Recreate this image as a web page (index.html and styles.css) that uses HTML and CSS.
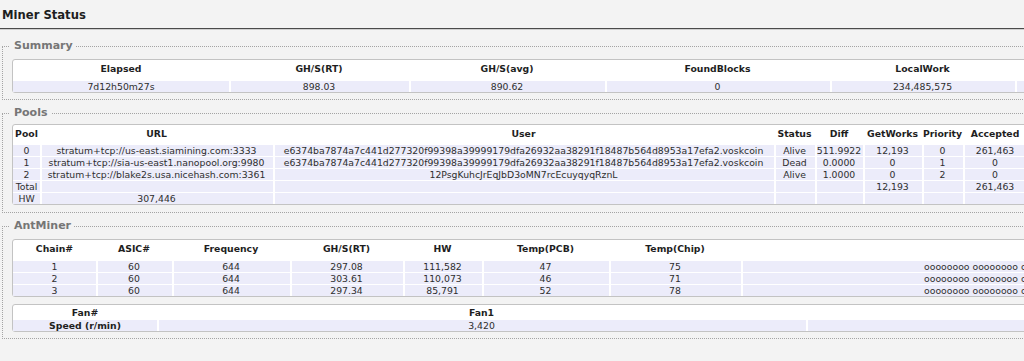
FILE: index.html
```html
<!DOCTYPE html>
<html lang="en">
<head>
<meta charset="utf-8">
<title>Miner Status</title>
<link rel="stylesheet" href="styles.css">
</head>
<body>
<h2 class="title">Miner Status</h2>

<fieldset class="panel panel-first">
  <legend class="panel-legend">Summary</legend>
  <table class="grid grid-summary">
    <colgroup>
      <col class="w216"><col class="w180"><col class="w196"><col class="w225"><col class="w185"><col class="w180">
    </colgroup>
    <thead>
      <tr><th>Elapsed</th><th>GH/S(RT)</th><th>GH/S(avg)</th><th>FoundBlocks</th><th>LocalWork</th><th></th></tr>
    </thead>
    <tbody>
      <tr><td>7d12h50m27s</td><td>898.03</td><td>890.62</td><td>0</td><td>234,485,575</td><td></td></tr>
    </tbody>
  </table>
</fieldset>

<fieldset class="panel panel-pools">
  <legend class="panel-legend">Pools</legend>
  <table class="grid grid-pools">
    <colgroup>
      <col class="w27"><col class="w233"><col class="w501"><col class="w41"><col class="w48"><col class="w59"><col class="w41"><col class="w64"><col class="w120">
    </colgroup>
    <thead>
      <tr><th>Pool</th><th>URL</th><th>User</th><th>Status</th><th>Diff</th><th>GetWorks</th><th>Priority</th><th>Accepted</th><th></th></tr>
    </thead>
    <tbody>
      <tr><td>0</td><td>stratum+tcp://us-east.siamining.com:3333</td><td>e6374ba7874a7c441d277320f99398a39999179dfa26932aa38291f18487b564d8953a17efa2.voskcoin</td><td>Alive</td><td>511.9922</td><td>12,193</td><td>0</td><td>261,463</td><td></td></tr>
      <tr><td>1</td><td>stratum+tcp://sia-us-east1.nanopool.org:9980</td><td>e6374ba7874a7c441d277320f99398a39999179dfa26932aa38291f18487b564d8953a17efa2.voskcoin</td><td>Dead</td><td>0.0000</td><td>0</td><td>1</td><td>0</td><td></td></tr>
      <tr><td>2</td><td>stratum+tcp://blake2s.usa.nicehash.com:3361</td><td>12PsgKuhcJrEqJbD3oMN7rcEcuyqyqRznL</td><td>Alive</td><td>1.0000</td><td>0</td><td>2</td><td>0</td><td></td></tr>
      <tr><td>Total</td><td></td><td></td><td></td><td></td><td>12,193</td><td></td><td>261,463</td><td></td></tr>
      <tr><td>HW</td><td>307,446</td><td></td><td></td><td></td><td></td><td></td><td></td><td></td></tr>
    </tbody>
  </table>
</fieldset>

<fieldset class="panel">
  <legend class="panel-legend">AntMiner</legend>
  <table class="grid grid-chains">
    <colgroup>
      <col class="w83"><col class="w76"><col class="w118"><col class="w113"><col class="w79"><col class="w127"><col class="w132"><col class="w728">
    </colgroup>
    <thead>
      <tr><th>Chain#</th><th>ASIC#</th><th>Frequency</th><th>GH/S(RT)</th><th>HW</th><th>Temp(PCB)</th><th>Temp(Chip)</th><th></th></tr>
    </thead>
    <tbody>
      <tr><td>1</td><td>60</td><td>644</td><td>297.08</td><td>111,582</td><td>47</td><td>75</td><td>oooooooo oooooooo oooooooo oooooooo oooooooo oooooooo oooooooo oooo</td></tr>
      <tr><td>2</td><td>60</td><td>644</td><td>303.61</td><td>110,073</td><td>46</td><td>71</td><td>oooooooo oooooooo oooooooo oooooooo oooooooo oooooooo oooooooo oooo</td></tr>
      <tr><td>3</td><td>60</td><td>644</td><td>297.34</td><td>85,791</td><td>52</td><td>78</td><td>oooooooo oooooooo oooooooo oooooooo oooooooo oooooooo oooooooo oooo</td></tr>
    </tbody>
  </table>

  <table class="grid grid-fans">
    <colgroup>
      <col class="w144"><col class="w649"><col class="w600">
    </colgroup>
    <thead>
      <tr><th>Fan#</th><th>Fan1</th><th></th></tr>
    </thead>
    <tbody>
      <tr><th class="row-head">Speed (r/min)</th><td>3,420</td><td></td></tr>
    </tbody>
  </table>
</fieldset>
</body>
</html>
```

FILE: styles.css
```css
html {
  overflow: hidden;
  background: #f3f3f3;
}

body {
  margin: 0;
  font-family: "DejaVu Sans", Verdana, sans-serif;
  font-size: 9.3px;
  color: #2e2e2e;
}

.title {
  margin: 0;
  padding: 7px 2px 5px;
  font-size: 11.6px;
  line-height: 16px;
  font-weight: bold;
  color: #1e1e1e;
  border-bottom: 1px solid #4a4a4a;
  box-shadow: 0 1px 0 #cfcfcf;
}

.panel {
  margin: 6px 0 0 2px;
  border: 1px dotted #a4a4a4;
  padding: 6px 0 6px 9px;
  min-inline-size: min-content;
}

.panel-first {
  margin-top: 10px;
}

.panel-pools {
  padding-top: 4px;
  padding-bottom: 7px;
}

.panel-legend {
  margin-left: -2px;
  padding: 0 3px 0 4px;
  font-size: 11px;
  line-height: 14px;
  font-weight: bold;
  color: #767676;
}

.grid {
  border-collapse: separate;
  border-spacing: 0;
  table-layout: fixed;
  background: #fff;
  border: 1px solid #c3c3c3;
  border-radius: 3px;
}

.grid th {
  padding: 3px 0 6px;
  line-height: 11px;
  font-weight: bold;
  text-align: center;
  color: #1e1e1e;
  white-space: nowrap;
}

.grid td {
  padding: 1px 0 0;
  line-height: 11px;
  text-align: center;
  white-space: nowrap;
  background: #ececfa;
  box-shadow: inset 2px 1px 0 #fff;
}

.grid td:first-child {
  box-shadow: inset 0 1px 0 #fff;
}

.grid-summary { width: 1182px; }
.grid-pools { width: 1134px; }
.grid-chains { width: 1456px; }

.grid-pools th {
  padding-bottom: 5px;
}

.grid-fans {
  width: 1393px;
  margin-top: 7px;
}

.grid-fans th {
  padding: 2px 0 1px;
}

.grid-fans .row-head {
  padding: 1px 0 0;
  background: #ececfa;
  box-shadow: inset 0 1px 0 #fff;
}

.w27 { width: 27px; }
.w41 { width: 41px; }
.w48 { width: 48px; }
.w59 { width: 59px; }
.w64 { width: 64px; }
.w76 { width: 76px; }
.w79 { width: 79px; }
.w83 { width: 83px; }
.w113 { width: 113px; }
.w118 { width: 118px; }
.w120 { width: 120px; }
.w127 { width: 127px; }
.w132 { width: 132px; }
.w144 { width: 144px; }
.w180 { width: 180px; }
.w185 { width: 185px; }
.w196 { width: 196px; }
.w216 { width: 216px; }
.w225 { width: 225px; }
.w233 { width: 233px; }
.w501 { width: 501px; }
.w600 { width: 600px; }
.w649 { width: 649px; }
.w728 { width: 728px; }
```
